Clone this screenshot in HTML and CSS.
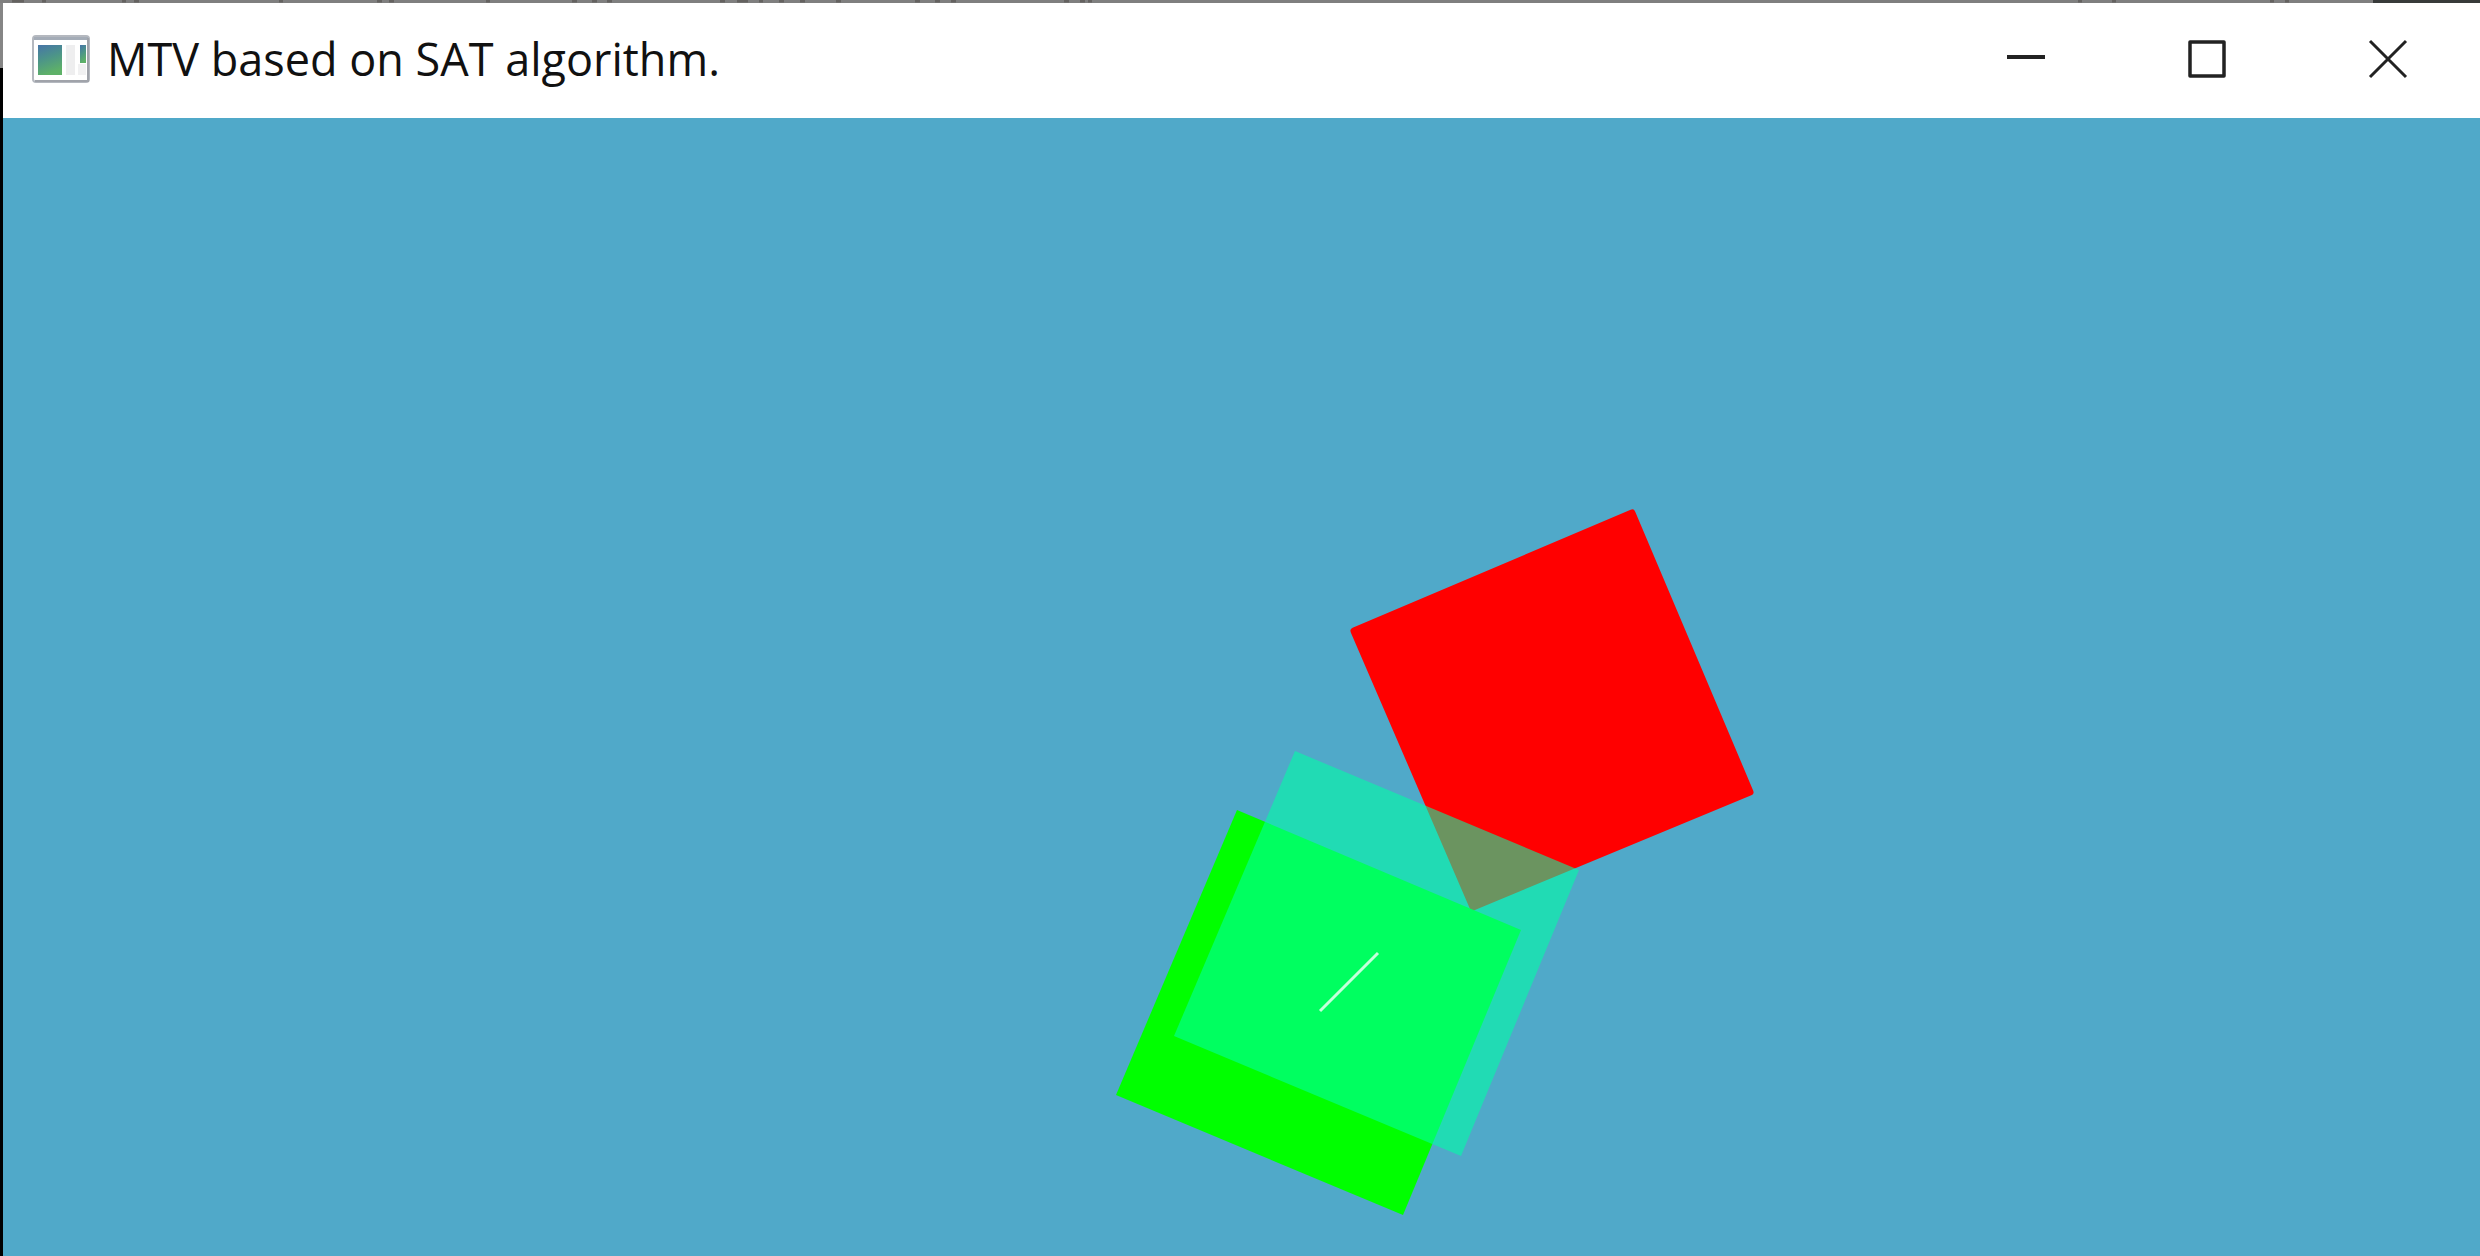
FILE: index.html
```html
<!DOCTYPE html>
<html lang="en">
<head>
<meta charset="utf-8">
<title>MTV based on SAT algorithm.</title>
<link rel="stylesheet" href="styles.css">
</head>
<body>
<div class="backdrop" aria-hidden="true">
  <svg class="backdrop-marks" width="2373" height="3" viewBox="0 0 2373 3">
    <path d="M12 1h12M42 1h4M122 1h4M134 1h5M279 1h4M377 1h5M389 1h5M486 1h4M572 1h5M592 1h5M607 1h5M720 1h5M737 1h11M759 1h4M779 1h5M800 1h5M836 1h5M915 1h5M935 1h5M951 1h5M1064 1h5M1080 1h5M1088 1h4M2078 1h4M2112 1h4M2270 1h4M2285 1h4" stroke="#646260" stroke-width="3"/>
  </svg>
  <span class="backdrop-dark"></span>
</div>
<main class="window">
  <header class="titlebar">
    <svg class="app-icon" viewBox="0 0 58 48" aria-hidden="true">
      <defs>
        <linearGradient id="pane" x1="0" y1="0" x2="0.3" y2="1">
          <stop offset="0" stop-color="#4674a8"/>
          <stop offset="0.5" stop-color="#4c9489"/>
          <stop offset="1" stop-color="#5eb168"/>
        </linearGradient>
      </defs>
      <rect x="1" y="1" width="56" height="46" rx="3" fill="#fff" stroke="#b4b8bf" stroke-width="2"/>
      <path d="M2 2h54v3H2z" fill="#a4acb7"/>
      <path d="M56 3v43H3" fill="none" stroke="#a0a3aa" stroke-width="2"/>
      <rect x="6" y="10" width="24" height="30" fill="url(#pane)"/>
      <path d="M34 10h9v30h-9z" fill="#eeeeef"/>
      <path d="M46 29h8v11h-8z" fill="#f1f1f2"/>
      <rect x="48" y="10" width="6" height="18" fill="url(#pane)"/>
    </svg>
    <h1 class="title">MTV based on SAT algorithm.</h1>
    <div class="controls">
      <button class="control" type="button" aria-label="Minimize">
        <svg class="glyph" viewBox="0 0 40 40"><path d="M1 18h38" stroke-width="4"/></svg>
      </button>
      <button class="control" type="button" aria-label="Maximize">
        <svg class="glyph" viewBox="0 0 40 40"><rect x="3" y="3" width="34" height="34" stroke-width="3.5" stroke-linejoin="round"/></svg>
      </button>
      <button class="control" type="button" aria-label="Close">
        <svg class="glyph" viewBox="0 0 40 40"><path d="M2 2l36 36M38 2L2 38" stroke-width="3"/></svg>
      </button>
    </div>
  </header>
  <svg class="stage" viewBox="3 118 2477 1138" role="img" aria-label="Two overlapping boxes and the translation vector that separates them">
    <polygon class="box-red" points="1632,513 1354,631 1473,907 1750,792"/>
    <polygon class="box-green" points="1237,810 1116,1095 1403,1215 1521,930"/>
    <polygon class="box-moved" points="1295,751 1174,1036 1461,1156 1579,870"/>
    <path class="vector" d="M1320 1011L1378 953"/>
  </svg>
</main>
</body>
</html>
```
FILE: styles.css
```css
* {
  box-sizing: border-box;
}

body {
  margin: 0;
  min-height: 100vh;
  display: flex;
  flex-direction: column;
  background: #fff;
  font-family: "Open Sans", "Noto Sans", sans-serif;
}

.backdrop {
  display: flex;
  height: 3px;
  overflow: hidden;
  background: #7f7f7f;
}

.backdrop-marks {
  flex: 1;
  min-width: 0;
}

.backdrop-dark {
  width: 107px;
  background: #383b3a;
}

.window {
  flex: 1;
  display: flex;
  flex-direction: column;
  border-left: 3px solid;
  border-image: linear-gradient(#858585 65px, #000 65px) 0 0 0 3;
}

.titlebar {
  display: flex;
  align-items: center;
  height: 115px;
  padding: 0 2px 4px 29px;
  background: #fff;
}

.app-icon {
  width: 58px;
  height: 48px;
}

.title {
  flex: 1;
  margin: 0 0 0 17px;
  font-size: 45px;
  line-height: 60px;
  font-weight: 400;
  color: #111;
  white-space: nowrap;
}

.controls {
  display: flex;
  align-self: stretch;
}

.control {
  width: 181px;
  padding: 0;
  border: 0;
  background: transparent;
  display: flex;
  align-items: center;
  justify-content: center;
}

.control:hover {
  background: #e5e5e5;
}

.glyph {
  width: 40px;
  height: 40px;
  fill: none;
  stroke: #222;
}

.stage {
  flex: 1;
  display: block;
  width: 100%;
  min-height: 0;
  background: #50a9c9;
}

.box-red {
  fill: #f00;
  stroke: #f00;
  stroke-width: 7px;
  stroke-linejoin: round;
}

.box-green {
  fill: #0f0;
}

.box-moved {
  fill: rgba(0, 255, 165, 0.58);
}

.vector {
  stroke: #c4ffdc;
  stroke-width: 3px;
}
```
